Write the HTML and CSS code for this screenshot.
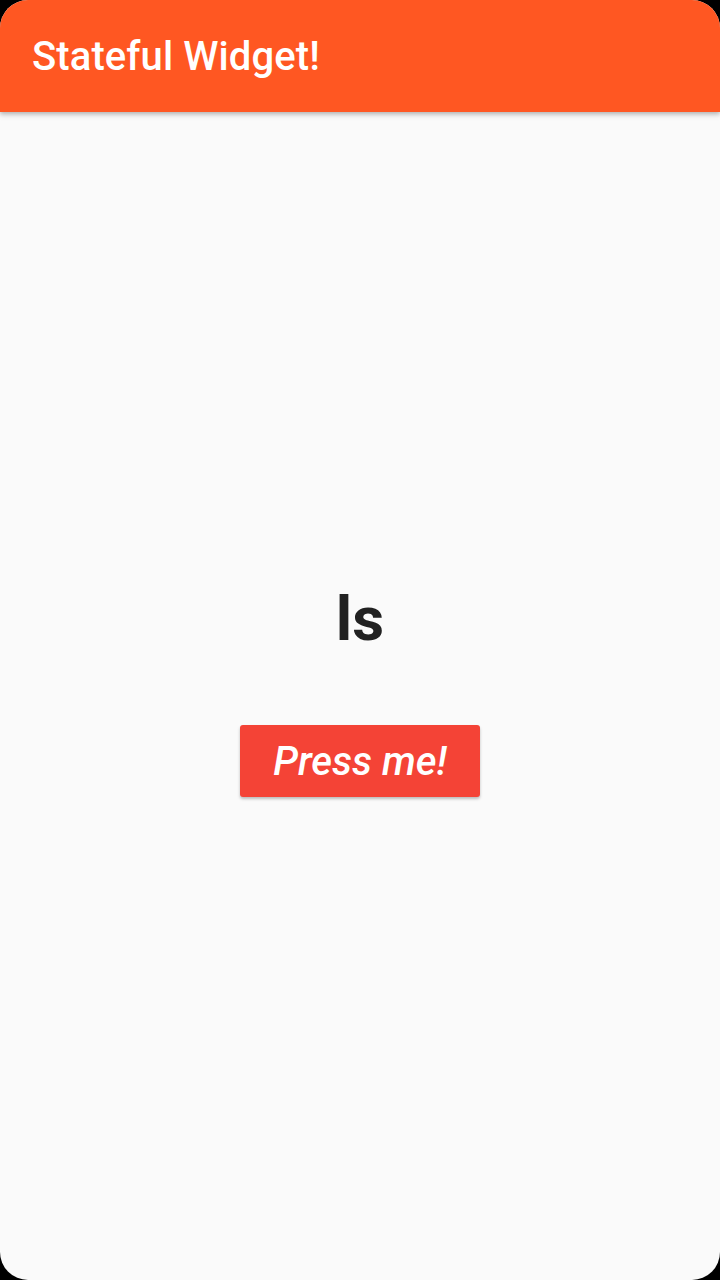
FILE: index.html
```html
<!DOCTYPE html>
<html>
<head>
<meta charset="utf-8">
<link rel="stylesheet" href="styles.css">
</head>
<body>
<div class="screen">
  <header class="appbar"><h1 class="title">Stateful Widget!</h1></header>
  <main class="content">
    <div class="word">ls</div>
    <button class="btn">Press me!</button>
  </main>
</div>
</body>
</html>
```
FILE: styles.css
```css
html, body { margin: 0; padding: 0; background: #000; }
body { width: 720px; height: 1280px; overflow: hidden; font-family: Roboto, "Noto Sans", sans-serif; }
.screen {
  width: 720px; height: 1280px; background: #fafafa;
  border-radius: 28px; overflow: hidden;
  display: flex; flex-direction: column;
}
.appbar {
  height: 112px; background: #ff5722; flex: none;
  display: flex; align-items: center; padding-left: 32px;
  box-shadow: 0 2px 4px rgba(0,0,0,0.22), 0 4px 6px rgba(0,0,0,0.08);
  position: relative; z-index: 1;
}
.title { margin: 0; color: #fff; font-size: 40px; font-weight: 500; letter-spacing: 0.1px; }
.content {
  flex: 1; display: flex; flex-direction: column; align-items: center; justify-content: center;
  padding-bottom: 7px;
}
.word { font-size: 62px; font-weight: 700; color: #212121; line-height: 1; }
.btn {
  margin-top: 75px; width: 240px; height: 72px; border: none; border-radius: 3px;
  background: #f44336; color: #fff; font-family: Roboto, sans-serif; font-style: italic;
  font-size: 40px; font-weight: 500;
  box-shadow: 0 2px 3px rgba(0,0,0,0.25);
}
```
